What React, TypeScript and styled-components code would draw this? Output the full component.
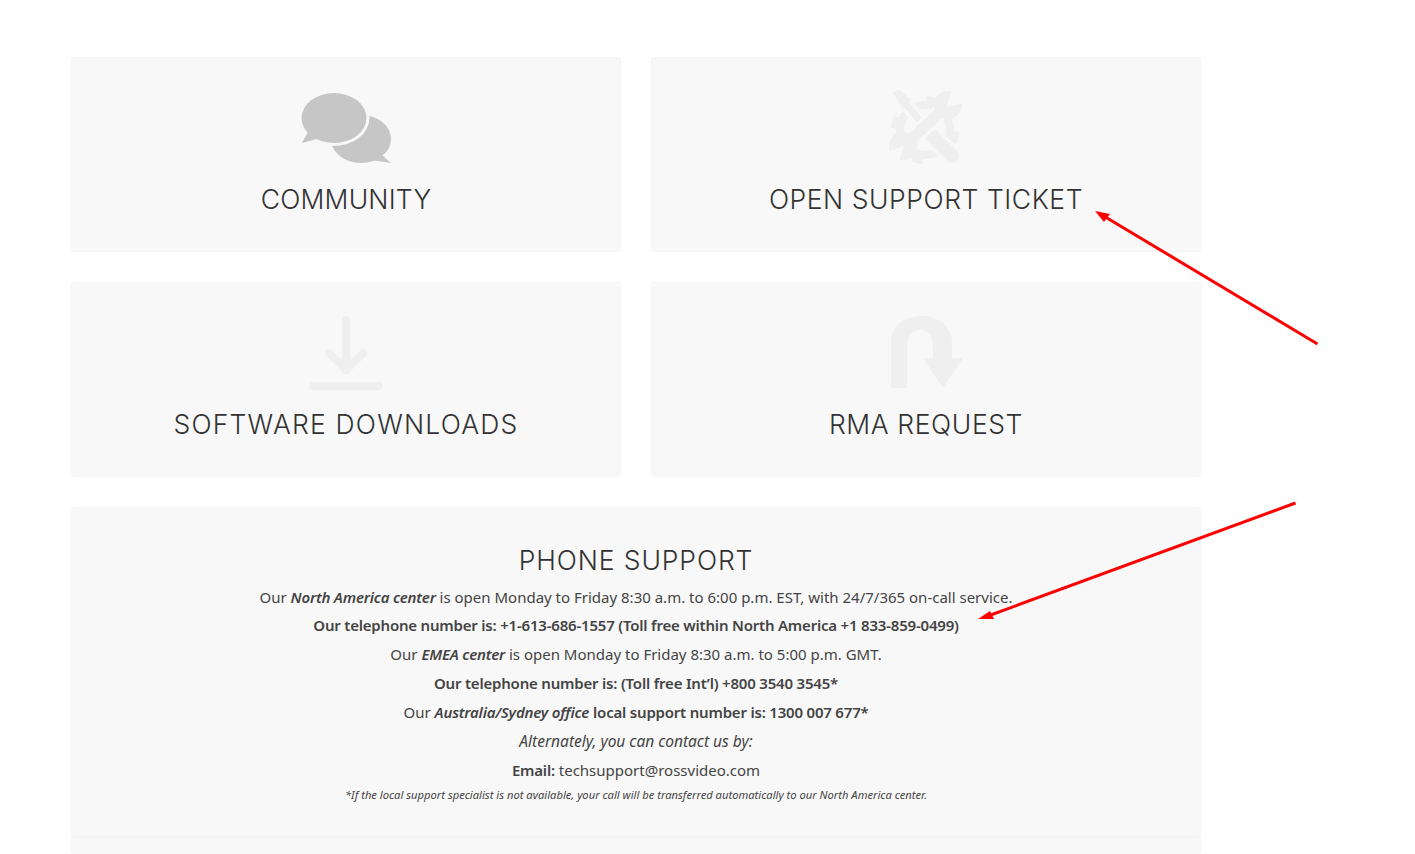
import styled, { createGlobalStyle } from "styled-components";

const GlobalStyle = createGlobalStyle`
  html, body {
    margin: 0;
    height: 100%;
    overflow: hidden;
    background: #fff;
  }
`;

function ChatIcon() {
  return (
    <svg width="92" height="73" viewBox="-1 1 92 73">
      <ellipse cx="60" cy="47" rx="30" ry="24" fill="#c6c6c6" />
      <path d="M80 62 L90 71 L70 68 Z" fill="#c6c6c6" />
      <ellipse cx="33" cy="26" rx="35.5" ry="28" fill="#f8f8f8" />
      <ellipse cx="33" cy="26" rx="32.5" ry="25" fill="#c6c6c6" />
      <path d="M7 40 L1 51 L16 47 Z" fill="#c6c6c6" />
    </svg>
  );
}

function ToolsIcon() {
  const teeth = [0, 90, 180, 270];
  return (
    <svg width="74" height="74" viewBox="19 10 74 74">
      <circle cx="55" cy="50" r="25" fill="none" stroke="#efefef" strokeWidth="8" />
      {teeth.map((a) => (
        <rect key={a} x="49" y="16" width="12" height="9" fill="#efefef" transform={`rotate(${a + 14} 55 50)`} />
      ))}
      <path d="M34 22 L60 52" stroke="#f8f8f8" strokeWidth="14" />
      <path d="M60 54 L82 76" stroke="#f8f8f8" strokeWidth="19" strokeLinecap="round" />
      <path d="M34 22 L60 52" stroke="#efefef" strokeWidth="7" />
      <path d="M23 13 L29 9 L41 20 L33 29 Z" fill="#efefef" />
      <path d="M62 56 L82 76" stroke="#efefef" strokeWidth="14" strokeLinecap="round" />
      <path d="M36 64 L76 27" stroke="#f8f8f8" strokeWidth="17" />
      <path d="M36 64 L76 27" stroke="#efefef" strokeWidth="11" />
      <circle cx="78" cy="25" r="14" fill="#efefef" />
      <circle cx="33" cy="66" r="14" fill="#efefef" />
      <path d="M77 27 L82 8 L96 23 Z" fill="#f8f8f8" />
      <path d="M34 66 L17 72 L28 84 Z" fill="#f8f8f8" />
    </svg>
  );
}

function DownloadIcon() {
  return (
    <svg width="74" height="75" viewBox="309 316 74 75">
      <g fill="none" stroke="#efefef" strokeWidth="8" strokeLinecap="round" strokeLinejoin="round">
        <path d="M346 320 V370" />
        <path d="M329 353 L346 370 L363 353" />
        <path d="M313 386 H379" />
      </g>
    </svg>
  );
}

function UTurnIcon() {
  return (
    <svg width="74" height="74" viewBox="889 315 74 74">
      <path
        d="M891 388 V342 C891 326 905 316 921 316 C938 316 952 326 952 342 V358 H963 L943 388 L923 358 H933 V345 C933 336 928 330 921 330 C913 330 907 336 907 345 V388 Z"
        fill="#efefef"
      />
    </svg>
  );
}

export default function App() {
  return (
    <>
      <GlobalStyle />
      <Page>
        <Grid>
          <Tile>
            <IconSlot $top={36}><ChatIcon /></IconSlot>
            <TileTitle $spacing={0.2}>COMMUNITY</TileTitle>
          </Tile>
          <Tile>
            <IconSlot $top={33}><ToolsIcon /></IconSlot>
            <TileTitle $spacing={0.55}>OPEN SUPPORT TICKET</TileTitle>
          </Tile>
          <Tile>
            <IconSlot $top={34}><DownloadIcon /></IconSlot>
            <TileTitle $spacing={1.2}>SOFTWARE DOWNLOADS</TileTitle>
          </Tile>
          <Tile>
            <IconSlot $top={33}><UTurnIcon /></IconSlot>
            <TileTitle $spacing={0.6}>RMA REQUEST</TileTitle>
          </Tile>
        </Grid>
        <PhonePanel>
          <PanelTitle>PHONE SUPPORT</PanelTitle>
          <Line $tight>Our <BoldItalic>North America center</BoldItalic> is open Monday to Friday 8:30 a.m. to 6:00 p.m. EST, with 24/7/365 on-call service.</Line>
          <Line><b>Our telephone number is: +1-613-686-1557 (Toll free within North America +1 833-859-0499)</b></Line>
          <Line>Our <BoldItalic>EMEA center</BoldItalic> is open Monday to Friday 8:30 a.m. to 5:00 p.m. GMT.</Line>
          <Line><b>Our telephone number is: (Toll free Int’l) +800 3540 3545*</b></Line>
          <Line>Our <BoldItalic>Australia/Sydney office</BoldItalic> <b>local support number is: 1300 007 677*</b></Line>
          <Line><Lead>Alternately, you can contact us by:</Lead></Line>
          <Line><b>Email:</b> techsupport@rossvideo.com</Line>
          <Footnote>*If the local support specialist is not available, your call will be transferred automatically to our North America center.</Footnote>
        </PhonePanel>
        <NextPanel />
      </Page>
      <Annotations width="1415" height="854" viewBox="0 0 1415 854">
        <path d="M1317.5 344 L1102 215" stroke="#f00" strokeWidth="3" />
        <path d="M1095 211 L1110 214 L1104 222 Z" fill="#f00" />
        <path d="M1295.5 503 L988 616" stroke="#f00" strokeWidth="3" />
        <path d="M978 619 L990 611 L994 619 Z" fill="#f00" />
      </Annotations>
    </>
  );
}

const Page = styled.div`
  width: 1130px;
  padding: 57px 0 0 71px;
  display: flex;
  flex-direction: column;
  gap: 30px;
  font-family: "Noto Sans", "Open Sans", sans-serif;
  color: #444;
`;

const Grid = styled.div`
  display: grid;
  grid-template-columns: repeat(2, 550px);
  grid-auto-rows: 195px;
  gap: 30px;
`;

const Panel = styled.div`
  background: #f8f8f8;
  border: 1px solid #f5f5f5;
  border-radius: 3px;
  box-sizing: border-box;
`;

const Tile = styled(Panel)`
  display: flex;
  flex-direction: column;
  align-items: center;
`;

const IconSlot = styled.div<{ $top: number }>`
  height: 111px;
  box-sizing: border-box;
  padding-top: ${(p) => p.$top - 1}px;
  line-height: 0;
`;

const TileTitle = styled.div<{ $spacing: number }>`
  font-family: "Inter", "Liberation Sans", sans-serif;
  font-size: 26.5px;
  font-weight: 300;
  letter-spacing: ${(p) => p.$spacing}px;
  line-height: 60px;
  color: #333;
`;

const PhonePanel = styled(Panel)`
  height: 330px;
  padding-top: 30px;
  text-align: center;
`;

const PanelTitle = styled.div`
  font-family: "Inter", "Liberation Sans", sans-serif;
  font-size: 26.5px;
  font-weight: 300;
  letter-spacing: 0.9px;
  line-height: 44px;
  color: #333;
  margin-bottom: 1px;
`;

const Line = styled.div<{ $tight?: boolean }>`
  font-size: 15px;
  line-height: ${(p) => (p.$tight ? 28 : 29)}px;
  b {
    font-weight: 600;
    letter-spacing: -0.2px;
  }
`;

const BoldItalic = styled.b`
  font-style: italic;
`;

const Lead = styled.i`
  font-size: 15.5px;
`;

const Footnote = styled.div`
  font-size: 11.2px;
  font-style: italic;
  line-height: 20px;
`;

const NextPanel = styled(Panel)`
  height: 17px;
  margin-top: -30px;
  border-bottom: none;
`;

const Annotations = styled.svg`
  position: absolute;
  left: 0;
  top: 0;
  pointer-events: none;
`;
